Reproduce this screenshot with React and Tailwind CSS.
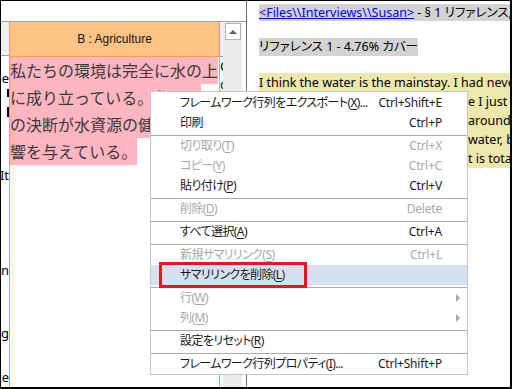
import React from "react";

const items = [
  { label: "フレームワーク行列をエクスポート", key: "X", suffix: "...", sc: "Ctrl+Shift+E" },
  { label: "印刷", sc: "Ctrl+P" },
  "sep",
  { label: "切り取り", key: "T", sc: "Ctrl+X", dis: true },
  { label: "コピー", key: "Y", sc: "Ctrl+C", dis: true },
  { label: "貼り付け", key: "P", sc: "Ctrl+V" },
  "sep",
  { label: "削除", key: "D", sc: "Delete", dis: true },
  "sep",
  { label: "すべて選択", key: "A", sc: "Ctrl+A" },
  "sep",
  { label: "新規サマリリンク", key: "S", sc: "Ctrl+L", dis: true },
  { label: "サマリリンクを削除", key: "L", hl: true },
  "sep",
  { label: "行", key: "W", dis: true, sub: true },
  { label: "列", key: "M", dis: true, sub: true },
  "sep",
  { label: "設定をリセット", key: "R" },
  "sep",
  { label: "フレームワーク行列プロパティ", key: "I", suffix: "...", sc: "Ctrl+Shift+P" },
];

function MenuItem({ it }) {
  return (
    <div
      className={
        "flex items-center h-[20px] pl-[29px] pr-[25px] " +
        (it.hl ? "bg-[#d5e0f1] " : "") +
        (it.dis ? "text-[#a8a8a8]" : "text-[#1a1a1a]")
      }
    >
      <span className="flex-1 whitespace-nowrap tracking-[-0.6px]">
        {it.label}
        {it.key && (
          <>
            (<span className="underline underline-offset-[2px]">{it.key}</span>)
          </>
        )}
        {it.suffix}
      </span>
      {it.sc && <span className="whitespace-nowrap tracking-[-0.2px]">{it.sc}</span>}
      {it.sub && (
        <span className="mr-[-18px] w-0 h-0 border-y-[4px] border-y-transparent border-l-[4px] border-l-[#a8a8a8]" />
      )}
    </div>
  );
}

function LeftFrag({ h, text }) {
  return (
    <div className="flex justify-end overflow-hidden whitespace-nowrap" style={{ height: h }}>
      <span>{text}</span>
    </div>
  );
}

export default function App() {
  return (
    <div className="relative w-[512px] h-[389px] bg-white border-black border-t border-l border-r-2 border-b-2 flex overflow-hidden font-['Noto_Sans','Noto_Sans_CJK_JP',sans-serif] [font-feature-settings:'palt']">
      {/* LEFT PANEL */}
      <div className="w-[245px] flex flex-col">
        <div className="h-[21px] border-b border-[#a0a0a0]" />
        <div className="flex flex-1 min-h-0">
          {/* row header / previous column fragments */}
          <div className="w-[8px] flex flex-col text-[13px] leading-[19px] text-black">
            <div className="h-[35px] bg-[#f0f0f0] border-b border-[#a0a0a0]" />
            <div className="h-[13px]" />
            <LeftFrag h="19px" text="the" />
            <div className="h-[1px]" />
            <div className="flex justify-end h-[8px]">
              <span className="w-[2px] h-[8px] bg-black" />
            </div>
            <div className="h-[11px]" />
            <div className="flex justify-end h-[10px]">
              <span className="w-[2px] h-[10px] bg-black" />
            </div>
            <div className="h-[50px]" />
            <LeftFrag h="19px" text="It" />
            <div className="h-[78px]" />
            <LeftFrag h="19px" text="n" />
            <div className="h-[45px]" />
            <LeftFrag h="19px" text="g" />
            <div className="h-[27px]" />
            <LeftFrag h="19px" text="te" />
          </div>

          {/* Orange column */}
          <div className="w-[211px] border-x border-[#f4a23c] flex flex-col">
            <div className="h-[35px] bg-[#ffc485] border-b border-[#f4a23c] flex items-center justify-center text-[12px] text-[#111] font-['Liberation_Sans',sans-serif]">
              B : Agriculture
            </div>
            <div className="font-['Noto_Sans_CJK_JP',sans-serif] [font-feature-settings:normal] text-[16px] leading-[27px] text-[#3a3a3a] whitespace-nowrap">
              <div className="w-fit bg-[#ffb6c1]">私たちの環境は完全に水の上</div>
              <div className="w-fit bg-[#ffb6c1]">に成り立っている。私たち</div>
              <div className="w-fit bg-[#ffb6c1]">の決断が水資源の健康に影</div>
              <div className="w-fit bg-[#ffb6c1]">響を与えている。</div>
            </div>
          </div>

          {/* next column fragment */}
          <div className="w-[3px] flex flex-col overflow-hidden text-[13px] leading-[18px] text-black whitespace-nowrap">
            <div className="h-[35px] bg-[#f0f0f0] border-b border-[#a0a0a0]" />
            <div>Co</div>
            <div>co</div>
          </div>

          {/* scrollbar */}
          <div className="w-[19px] bg-[#ececec] flex flex-col items-center pt-[1px]">
            <div className="w-[16px] h-[17px] bg-white border border-[#b5b5b5] flex items-center justify-center">
              <span className="w-0 h-0 border-x-[4px] border-x-transparent border-b-[4px] border-b-[#606060]" />
            </div>
          </div>
          <div className="w-[4px]" />
        </div>
      </div>

      {/* divider */}
      <div className="w-px bg-[#6b6b6b]" />

      {/* RIGHT PANEL */}
      <div className="flex-1 min-w-0 overflow-hidden pl-[12px] pt-[3px] text-[12.5px] text-black whitespace-nowrap">
        <div className="leading-[18px]">
          <span className="bg-[#d3d3d3]">
            <span className="text-[#0000ff] underline">&lt;Files\\Interviews\\Susan&gt;</span>
            {" - § 1 リファレンス, 4.76% カバー"}
          </span>
        </div>
        <div className="mt-[16px] leading-[18px]">
          <span className="bg-[#d3d3d3] inline-block">リファレンス 1 - 4.76% カバー</span>
        </div>
        <div className="mt-[17px] leading-[19px]">
          <div>
            <span className="bg-[#eee8aa] inline-block">I think the water is the mainstay. I had never really thought</span>
          </div>
          <div className="flex">
            <span className="bg-[#eee8aa] inline-block w-[209px] overflow-hidden shrink-0">of it, because I just took it for granted. But</span>
            <span className="bg-[#eee8aa] inline-block">e I just took it for granted</span>
          </div>
          <div className="flex">
            <span className="bg-[#eee8aa] inline-block w-[209px] overflow-hidden shrink-0">when you start to look at what is</span>
            <span className="bg-[#eee8aa] inline-block">around here</span>
          </div>
          <div className="flex">
            <span className="bg-[#eee8aa] inline-block w-[209px] overflow-hidden shrink-0">everything depends on the</span>
            <span className="bg-[#eee8aa] inline-block">water, because</span>
          </div>
          <div className="flex">
            <span className="bg-[#eee8aa] inline-block w-[209px] overflow-hidden shrink-0">and the economy, that</span>
            <span className="bg-[#eee8aa] inline-block">t is totally</span>
          </div>
        </div>
      </div>

      {/* CONTEXT MENU */}
      <div className="absolute left-[149px] top-[90px] w-[318px] h-[284px] bg-white border border-[#c6c6c6] pt-[1px] font-['Noto_Sans','Noto_Sans_CJK_JP',sans-serif] [font-feature-settings:'palt'] text-[12px] leading-[20px]">
        {items.map((it, i) =>
          it === "sep" ? (
            <div key={i} className="h-[3px] pt-[2px]">
              <div className="h-px bg-[#a9a9a9]" />
            </div>
          ) : (
            <MenuItem key={i} it={it} />
          )
        )}
        <div className="absolute left-[8px] top-[170px] w-[148px] h-[26px] border-[3px] border-[#e8161f]" />
      </div>
    </div>
  );
}
